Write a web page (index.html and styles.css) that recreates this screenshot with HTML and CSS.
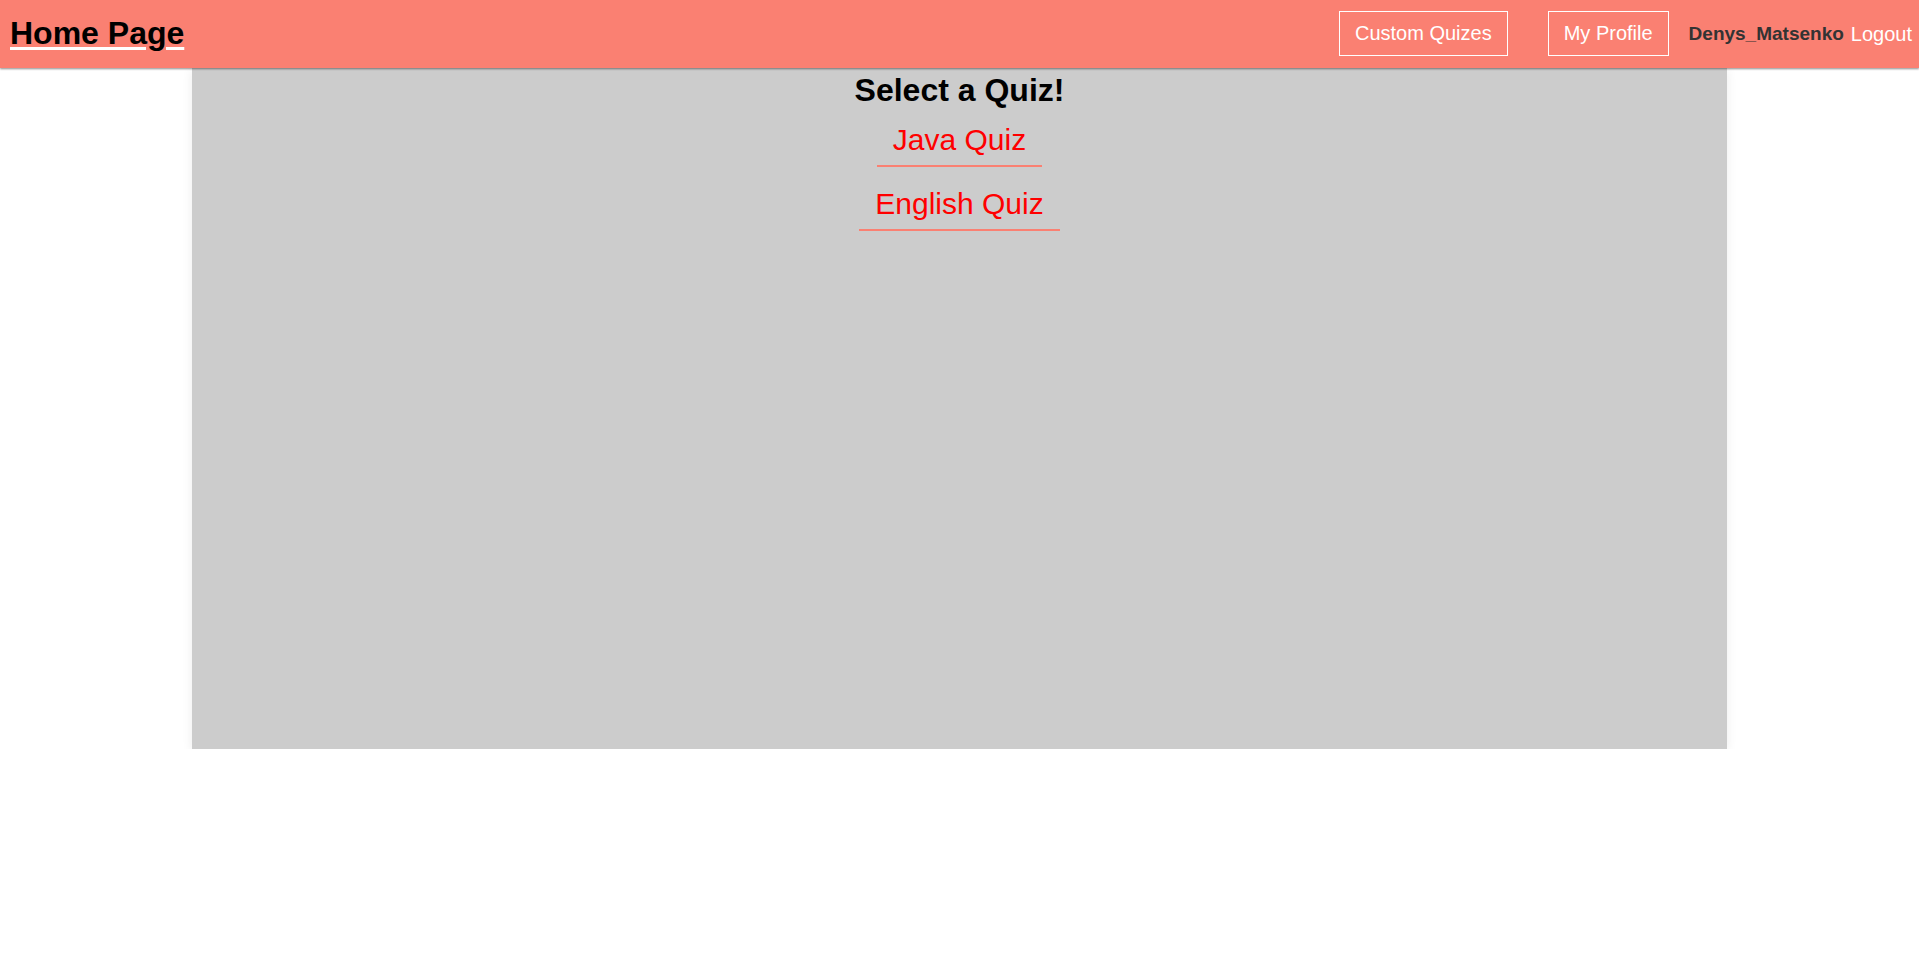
FILE: index.html
```html
<!DOCTYPE html>
<html lang="en">
<head>
<meta charset="utf-8">
<title>Home Page</title>
<link rel="stylesheet" href="styles.css">
</head>
<body>
<header class="navbar">
  <a class="brand" href="#">Home Page</a>
  <nav class="nav-right">
    <a class="nav-btn" href="#">Custom Quizes</a>
    <a class="nav-btn" href="#">My Profile</a>
    <span class="username">Denys_Matsenko</span>
    <a class="logout" href="#">Logout</a>
  </nav>
</header>
<main class="content">
  <h1 class="title">Select a Quiz!</h1>
  <div class="quiz-list">
    <a class="quiz-link" href="#">Java Quiz</a>
    <a class="quiz-link" href="#">English Quiz</a>
  </div>
</main>
</body>
</html>
```

FILE: styles.css
```css
html, body {
  margin: 0;
  padding: 0;
  background: #ffffff;
  font-family: "Liberation Sans", Arial, sans-serif;
}

.navbar {
  position: relative;
  z-index: 2;
  height: 68px;
  background: #fa8072;
  box-shadow: 0 1px 2px rgba(0, 0, 0, 0.45);
  display: flex;
  align-items: center;
  justify-content: space-between;
  padding: 0 7px 0 10px;
}

.brand {
  font-size: 32px;
  font-weight: bold;
  color: #000000;
  text-decoration: underline;
  text-decoration-color: #ffffff;
  text-decoration-thickness: 3px;
  text-underline-offset: 3px;
  margin-top: -1px;
}

.nav-right {
  display: flex;
  align-items: center;
}

.nav-btn {
  font-size: 20px;
  color: #ffffff;
  text-decoration: none;
  border: 1px solid #ffffff;
  padding: 10px 15px;
  margin-right: 40px;
  margin-bottom: 2px;
}

.nav-btn + .nav-btn {
  margin-right: 20px;
}

.username {
  font-size: 19px;
  font-weight: bold;
  color: #333333;
  margin-right: 7px;
}

.logout {
  font-size: 20px;
  color: #ffffff;
  text-decoration: none;
}

.content {
  width: 80%;
  height: 681px;
  margin: 0 auto;
  background: #cccccc;
  box-shadow: 0 2px 10px rgba(0, 0, 0, 0.08);
  box-sizing: border-box;
  padding-top: 4px;
  display: flex;
  flex-direction: column;
  align-items: center;
}

.title {
  margin: 0;
  font-size: 32px;
  font-weight: bold;
  color: #000000;
}

.quiz-list {
  margin-top: 6px;
  display: flex;
  flex-direction: column;
  align-items: center;
  gap: 12px;
}

.quiz-link {
  font-size: 30px;
  color: #ff0000;
  text-decoration: none;
  padding: 8px 16px;
  border-bottom: 2px solid #fa8072;
}
```
